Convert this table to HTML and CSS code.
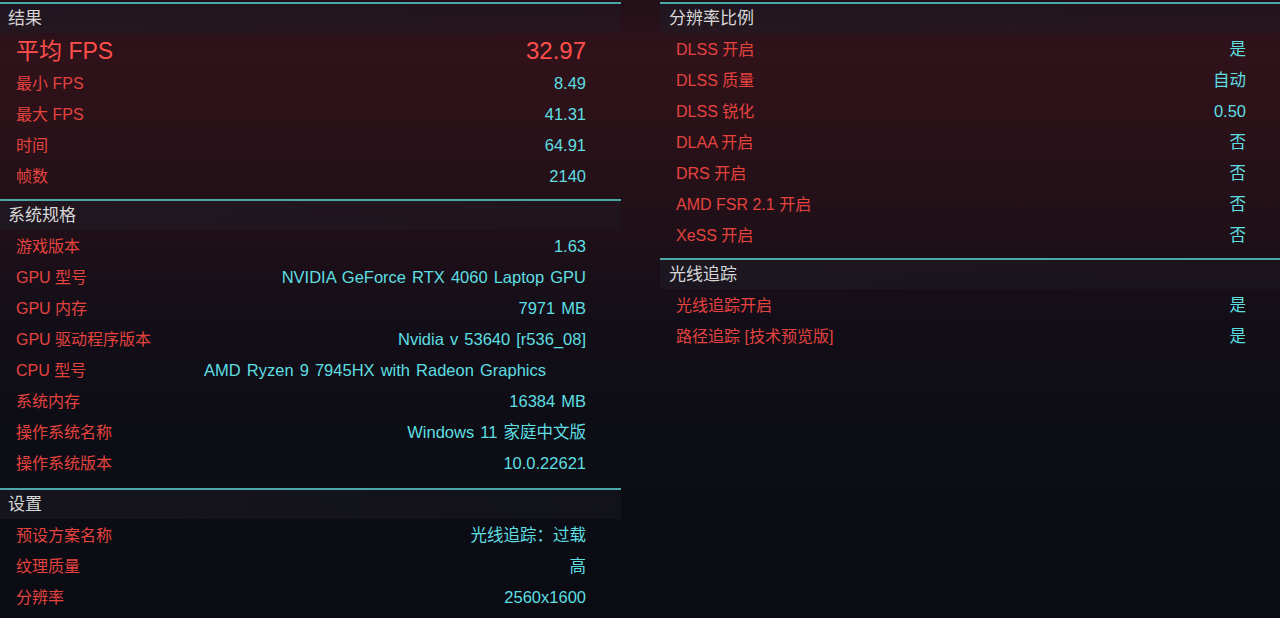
FILE: index.html
```html
<!DOCTYPE html>
<html lang="zh-CN">
<head>
<meta charset="utf-8">
<title>基准测试结果</title>
<link rel="stylesheet" href="styles.css">
</head>
<body>
<div class="wrap">
  <div class="panel left">
    <section class="section">
      <div class="head">结果</div>
      <div class="row big"><span class="label">平均 FPS</span><span class="value">32.97</span></div>
      <div class="row"><span class="label">最小 FPS</span><span class="value">8.49</span></div>
      <div class="row"><span class="label">最大 FPS</span><span class="value">41.31</span></div>
      <div class="row"><span class="label">时间</span><span class="value">64.91</span></div>
      <div class="row"><span class="label">帧数</span><span class="value">2140</span></div>
    </section>
    <section class="section pad10">
      <div class="head">系统规格</div>
      <div class="row"><span class="label">游戏版本</span><span class="value">1.63</span></div>
      <div class="row"><span class="label">GPU 型号</span><span class="value">NVIDIA GeForce RTX 4060 Laptop GPU</span></div>
      <div class="row"><span class="label">GPU 内存</span><span class="value">7971 MB</span></div>
      <div class="row"><span class="label">GPU 驱动程序版本</span><span class="value">Nvidia v 53640 [r536_08]</span></div>
      <div class="row"><span class="label">CPU 型号</span><span class="value long">AMD Ryzen 9 7945HX with Radeon Graphics</span></div>
      <div class="row"><span class="label">系统内存</span><span class="value">16384 MB</span></div>
      <div class="row"><span class="label">操作系统名称</span><span class="value">Windows 11 家庭中文版</span></div>
      <div class="row"><span class="label">操作系统版本</span><span class="value">10.0.22621</span></div>
    </section>
    <section class="section last">
      <div class="head">设置</div>
      <div class="row"><span class="label">预设方案名称</span><span class="value">光线追踪：过载</span></div>
      <div class="row"><span class="label">纹理质量</span><span class="value">高</span></div>
      <div class="row"><span class="label">分辨率</span><span class="value">2560x1600</span></div>
    </section>
  </div>
  <div class="panel right">
    <section class="section">
      <div class="head">分辨率比例</div>
      <div class="row"><span class="label">DLSS 开启</span><span class="value">是</span></div>
      <div class="row"><span class="label">DLSS 质量</span><span class="value">自动</span></div>
      <div class="row"><span class="label">DLSS 锐化</span><span class="value">0.50</span></div>
      <div class="row"><span class="label">DLAA 开启</span><span class="value">否</span></div>
      <div class="row"><span class="label">DRS 开启</span><span class="value">否</span></div>
      <div class="row"><span class="label">AMD FSR 2.1 开启</span><span class="value">否</span></div>
      <div class="row"><span class="label">XeSS 开启</span><span class="value">否</span></div>
    </section>
    <section class="section last">
      <div class="head">光线追踪</div>
      <div class="row"><span class="label">光线追踪开启</span><span class="value">是</span></div>
      <div class="row"><span class="label">路径追踪 [技术预览版]</span><span class="value">是</span></div>
    </section>
  </div>
</div>
</body>
</html>
```
FILE: styles.css
```css
html, body {
  margin: 0;
  padding: 0;
  height: 100%;
}
body {
  width: 1280px;
  height: 618px;
  overflow: hidden;
  font-family: "Liberation Sans", "Noto Sans CJK SC", sans-serif;
  background: linear-gradient(to bottom,
    #220f17 0px,
    #30121a 50px,
    #2b1118 120px,
    #211018 220px,
    #130e18 320px,
    #0c0d15 450px,
    #0a0b13 618px);
}
.wrap {
  display: flex;
  gap: 39px;
  padding-top: 2px;
}
.panel {
  display: flex;
  flex-direction: column;
}
.left { width: 621px; }
.right { flex: 1; }
.section {
  border-top: 2px solid #4aa9a6;
  padding-bottom: 8px;
}
.section.pad10 { padding-bottom: 10px; }
.section.last { padding-bottom: 0; }
.head {
  height: 29px;
  line-height: 29px;
  padding-left: 8px;
  font-size: 17px;
  color: #d6d6d6;
  background: linear-gradient(to right, rgba(30, 28, 38, 0.55), rgba(30, 28, 38, 0.35));
}
.right .head { padding-left: 9px; }
.row {
  box-sizing: border-box;
  height: 31px;
  line-height: 29px;
  padding: 2px 35px 0 16px;
  display: flex;
  align-items: baseline;
  justify-content: space-between;
  font-size: 16px;
}
.right .row { padding: 2px 34px 0 16px; }
.label { color: #e4433f; }
.value {
  color: #5edfe2;
  font-size: 16.5px;
  word-spacing: 1.5px;
}
.value.long { margin-right: 40px; }
.row.big {
  height: 34px;
  line-height: 33px;
  padding-top: 1px;
  font-size: 23px;
}
.row.big .value { font-size: 24px; }
.row.big .label,
.row.big .value { color: #ff4f4b; }
```
